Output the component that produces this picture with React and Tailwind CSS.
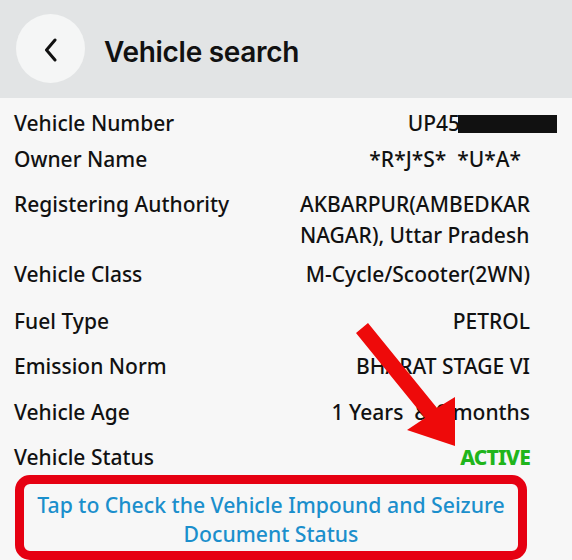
import React from 'react';

const rows = [
    { label: 'Owner Name', value: '*R*J*S*  *U*A*', cls: 'mt-[5px] pr-[9px]' },
];

const Row = ({ label, children, className = '' }) => (
    <div className={`flex justify-between items-start ${className}`}>
        <span>{label}</span>
        <span className="text-right whitespace-pre">{children}</span>
    </div>
);

const App = () => (
    <div className="relative w-[572px] h-[560px] overflow-hidden bg-[#f7f7f7] text-[#111]">
        <header className="h-[98px] bg-[#e2e4e5] flex items-center pl-4">
            <button className="w-[69px] h-[69px] rounded-full bg-[#f5f6f6] flex items-center justify-center -mt-[2px]">
                <svg width="14" height="24" viewBox="0 0 14 24" fill="none" stroke="#111" strokeWidth="3" strokeLinecap="round" strokeLinejoin="round" className="mt-[4px]">
                    <path d="M11 2 L2.5 12 L11 22" />
                </svg>
            </button>
            <h1 className="ml-[19px] text-[28px] font-semibold tracking-[-0.3px] font-['Inter',sans-serif] mt-[5px]">Vehicle search</h1>
        </header>

        <main className="px-[14px] pr-[42px] pt-[10px] text-[21px] font-medium leading-[31px] font-['Noto_Sans',sans-serif]">
            <Row label="Vehicle Number">
                UP45<span className="inline-block align-[-2px] w-[99px] h-[18px] bg-[#111] -ml-[2px] -mr-[27px]"></span>
            </Row>
            {rows.map((r) => (
                <Row key={r.label} label={r.label} className={r.cls}>{r.value}</Row>
            ))}
            <div className="flex justify-between items-start mt-[14px]">
                <span>Registering Authority</span>
                <span className="text-left">AKBARPUR(AMBEDKAR<br />NAGAR), Uttar Pradesh</span>
            </div>
            <Row label="Vehicle Class" className="mt-[8px]">M-Cycle/Scooter(2WN)</Row>
            <Row label="Fuel Type" className="mt-[16px]">PETROL</Row>
            <Row label="Emission Norm" className="mt-[14px]">BHARAT STAGE VI</Row>
            <Row label="Vehicle Age" className="mt-[15px]">{'1 Years  & 6 months'}</Row>
            <Row label="Vehicle Status" className="mt-[14px]">
                <span className="font-extrabold text-[#20b51b] tracking-[-0.8px]">ACTIVE</span>
            </Row>
        </main>

        <div className="mx-[15px] w-[512px] mt-[2px] border-[9px] border-[#e60012] rounded-[15px] pt-[6px] pb-[3px] text-center text-[21.2px] font-medium leading-[29px] text-[#1b8fcc] font-['Noto_Sans',sans-serif]">
            Tap to Check the Vehicle Impound and Seizure<br />Document Status
        </div>

        <svg className="absolute inset-0 pointer-events-none" width="572" height="560">
            <polygon
                fill="#ee0a0a"
                points="356,333 368,323 437,408 455,397 455,446 407,430 425,418"
            />
        </svg>
    </div>
);

export default App;
